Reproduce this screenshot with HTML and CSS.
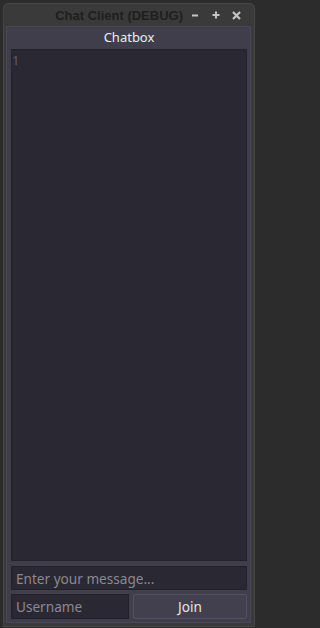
FILE: index.html
```html
<!DOCTYPE html>
<html>
<head>
<meta charset="utf-8">
<link rel="stylesheet" href="styles.css">
</head>
<body>
<div class="window">
  <div class="titlebar">
    <span class="title">Chat Client (DEBUG)</span>
    <span class="ctl"><svg width="8" height="8" viewBox="0 0 8 8"><rect x="1" y="3.5" width="6" height="2" fill="#c4c4c4"/></svg></span>
    <span class="ctl"><svg width="8" height="8" viewBox="0 0 8 8"><rect x="0.5" y="3" width="7" height="2" fill="#c4c4c4"/><rect x="3" y="0.5" width="2" height="7" fill="#c4c4c4"/></svg></span>
    <span class="ctl"><svg width="9" height="9" viewBox="0 0 9 9"><path d="M1 1 L8 8 M8 1 L1 8" stroke="#c4c4c4" stroke-width="2.2"/></svg></span>
  </div>
  <div class="panel">
    <div class="header">Chatbox</div>
    <div class="chatlog"><span class="lineno">1</span></div>
    <div class="field message">Enter your message...</div>
    <div class="row">
      <div class="field username">Username</div>
      <div class="button">Join</div>
    </div>
  </div>
</div>
</body>
</html>
```
FILE: styles.css
```css
html, body {
  margin: 0;
  padding: 0;
  background: #2c2c2c;
  width: 257px;
  height: 628px;
  overflow: hidden;
}
.window {
  margin: 3px 2px 0 3px;
  width: 252px;
  height: 624px;
  box-sizing: border-box;
  border: 1px solid #464646;
  border-radius: 5px 5px 0 0;
  background: #3a3a3a;
  display: flex;
  flex-direction: column;
}
.titlebar {
  height: 22px;
  display: flex;
  align-items: center;
  justify-content: flex-end;
  padding-right: 7px;
  font-family: "Liberation Sans", Arial, sans-serif;
  font-weight: bold;
  font-size: 13px;
  color: #1f1f1f;
}
.title {
  margin-right: 1px;
  padding-top: 1px;
}
.ctl {
  width: 21px;
  display: flex;
  justify-content: center;
  align-items: center;
}
.panel {
  flex: 1;
  margin: 0 3px 3px 2px;
  background: #403e4b;
  border: 1px solid #4a4856;
  display: flex;
  flex-direction: column;
  padding: 0 3px 3px 4px;
  font-family: "Noto Sans", sans-serif;
}
.header {
  height: 22px;
  line-height: 20px;
  text-align: center;
  color: #ededf0;
  font-size: 13px;
}
.chatlog {
  flex: 1;
  background: #2a2832;
  border: 1px solid #23222a;
  padding: 1px 0 0 0;
  font-size: 13px;
  line-height: 18px;
  color: #5e5c68;
}
.field {
  background: #2a2833;
  border: 1px solid #23222a;
  box-sizing: border-box;
  color: #8b8992;
  font-size: 13.6px;
  padding-left: 4px;
  display: flex;
  align-items: center;
}
.message {
  height: 24px;
  margin-top: 5px;
}
.row {
  display: flex;
  gap: 4px;
  margin-top: 4px;
  height: 25px;
}
.username {
  flex: 1 1 0;
  min-width: 0;
}
.button {
  flex: 1 1 0;
  min-width: 0;
  box-sizing: border-box;
  background: #42404e;
  border: 1px solid #54525f;
  border-radius: 2px;
  color: #e4e4e8;
  font-size: 13.6px;
  display: flex;
  align-items: center;
  justify-content: center;
}
```
